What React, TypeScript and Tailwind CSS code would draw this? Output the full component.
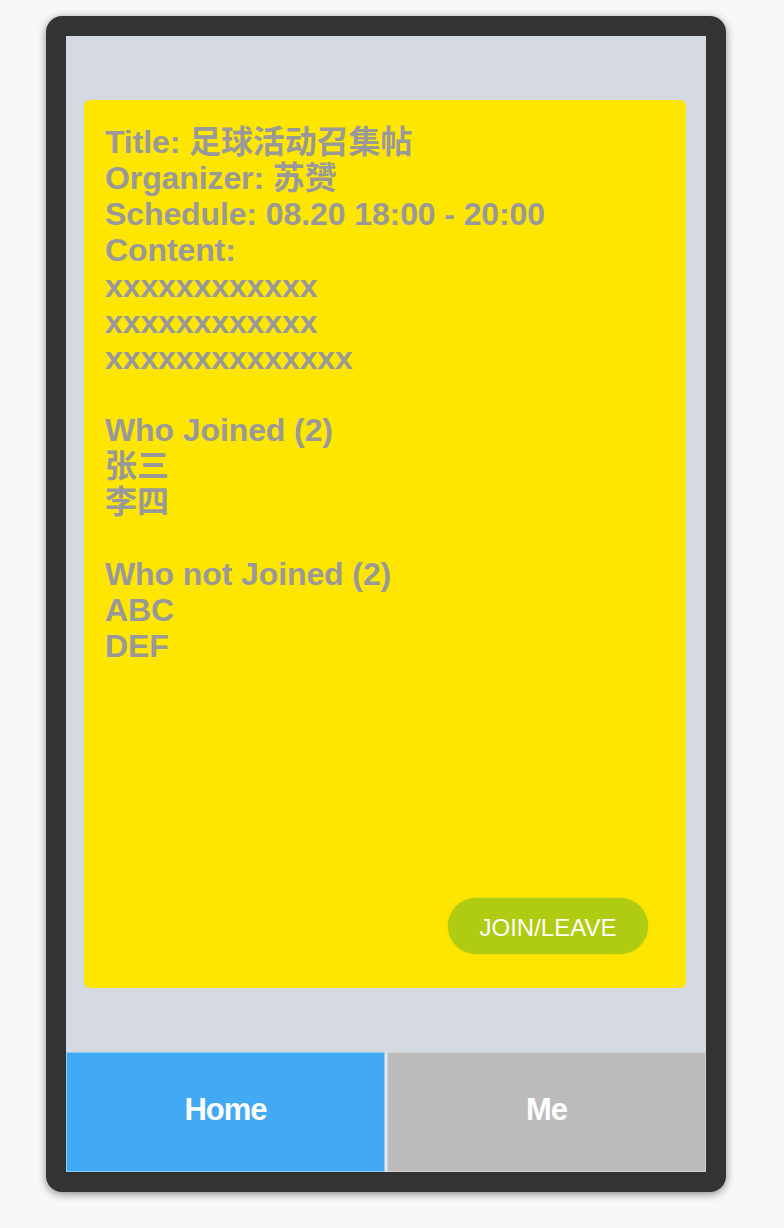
import React from "react";

const font = { fontFamily: '"Liberation Sans", Arial, "Noto Sans CJK SC", sans-serif' };

export default function App() {
  const lines: string[] = [
    "Title: 足球活动召集帖",
    "Organizer: 苏赟",
    "Schedule: 08.20 18:00 - 20:00",
    "Content:",
    "xxxxxxxxxxxx",
    "xxxxxxxxxxxx",
    "xxxxxxxxxxxxxx",
    "",
    "Who Joined (2)",
    "张三",
    "李四",
    "",
    "Who not Joined (2)",
    "ABC",
    "DEF",
  ];
  return (
    <div className="min-h-[1228px] w-[784px] bg-[#f8f8f8] pt-4" style={font}>
      <div className="ml-[46px] w-[680px] h-[1176px] rounded-[16px] bg-[#333333] p-5 shadow-[0_2px_8px_rgba(0,0,0,0.45)]">
        <div className="flex h-[1136px] w-[640px] flex-col bg-[#d5dae2]">
          <div className="pl-[18px] pr-5 pt-16 pb-16 flex-1 flex">
            <div className="flex flex-1 flex-col justify-between rounded-[6px] bg-[#ffe600] pl-[21px] pr-[38px] pt-[24px] pb-[34px]">
              <div className="text-[32px] font-bold leading-[36px] tracking-[-0.1px] text-[#999999]">
                {lines.map((l, i) => (
                  <div key={i} className="h-[36px] whitespace-nowrap">
                    {l}
                  </div>
                ))}
              </div>
              <div className="flex justify-end">
                <button className="h-[56px] w-[200px] rounded-full bg-[#afcb12] pt-[3px] text-[24px] text-white shadow-[0_0_2px_rgba(160,180,0,0.6)]">
                  JOIN/LEAVE
                </button>
              </div>
            </div>
          </div>
          <div className="flex h-[120px]">
            <div className="flex flex-1 items-center justify-center border border-[#8ccdf8] bg-[#42a9f5] pb-1 text-[31px] font-bold tracking-[-1px] text-white">
              Home
            </div>
            <div className="w-[2px] bg-[#e8e8e8]" />
            <div className="flex flex-1 items-center justify-center border border-[#d0d0d0] bg-[#bbbbbb] pb-1 text-[31px] font-bold tracking-[-1px] text-white">
              Me
            </div>
          </div>
        </div>
      </div>
    </div>
  );
}
